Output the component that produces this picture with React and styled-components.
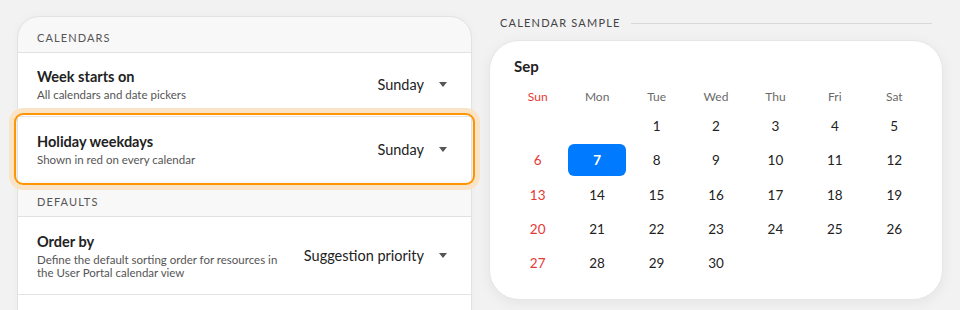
import React from "react";
import styled, { createGlobalStyle } from "styled-components";

const Global = createGlobalStyle`
  html, body { margin: 0; padding: 0; background: #f2f2f3; overflow: hidden; }
  body { font-family: Lato, "Open Sans", sans-serif; color: #222; -webkit-font-smoothing: antialiased; }
  * { box-sizing: border-box; }
`;

const Page = styled.div`
  display: grid;
  grid-template-columns: 455px 454px;
  column-gap: 17px;
  padding: 16px 0 0 17px;
  height: 310px;
  overflow: hidden;
`;

const Panel = styled.div`
  background: #f8f8f8;
  border: 1px solid #e2e2e2;
  border-radius: 22px 22px 0 0;
  box-shadow: 0 0 10px rgba(0, 0, 0, 0.03);
  align-self: start;
`;

const GroupHeader = styled.div`
  height: 36px;
  padding: 14px 0 0 19px;
  font-size: 11px;
  line-height: 14px;
  letter-spacing: 1.1px;
  text-transform: uppercase;
  color: #555;
  border-bottom: 1px solid #e2e2e2;
`;

const Row = styled.div`
  position: relative;
  display: flex;
  align-items: center;
  justify-content: space-between;
  height: ${(p) => p.$h}px;
  padding: 0 24px 0 19px;
  background: #fff;
  border-bottom: ${(p) => (p.$last ? "none" : "1px solid #e4e4e4")};
`;

const Highlight = styled.div`
  position: absolute;
  inset: -4px -4px -4px -4px;
  border: 2px solid #ff9500;
  border-radius: 9px;
  box-shadow: 0 0 0 5px #fae4c8;
  pointer-events: none;
`;

const TextCol = styled.div`
  display: flex;
  flex-direction: column;
  max-width: 252px;
`;

const Title = styled.div`
  font-size: 14.5px;
  line-height: 18px;
  font-weight: 700;
  color: #222;
  margin-bottom: 2px;
`;

const Sub = styled.div`
  font-size: 11.5px;
  line-height: 13px;
  color: #555;
`;

const Select = styled.div`
  display: flex;
  align-items: center;
  gap: 15px;
  font-size: 14.5px;
  color: #222;
`;

const Caret = styled.span`
  width: 0;
  height: 0;
  border-left: 4.5px solid transparent;
  border-right: 4.5px solid transparent;
  border-top: 5px solid #555;
`;

const Right = styled.div`
  display: flex;
  flex-direction: column;
  gap: 10px;
`;

const LabelRow = styled.div`
  display: flex;
  align-items: center;
  gap: 10px;
  padding: 0 11px;
  height: 14px;
`;

const Label = styled.div`
  font-size: 11px;
  line-height: 14px;
  letter-spacing: 1.2px;
  color: #444;
  white-space: nowrap;
`;

const Rule = styled.div`
  flex: 1;
  height: 1px;
  background: #d8d8d8;
`;

const Card = styled.div`
  background: #fff;
  border: 1px solid #e6e6e6;
  border-radius: 30px;
  box-shadow: 0 3px 14px rgba(0, 0, 0, 0.06);
  padding: 15px 18px 18px 18px;
  height: 260px;
`;

const Month = styled.div`
  font-size: 15px;
  line-height: 20px;
  font-weight: 700;
  color: #222;
  padding-left: 6px;
  margin-bottom: 13px;
`;

const Grid = styled.div`
  display: grid;
  grid-template-columns: repeat(7, 1fr);
`;

const WeekDay = styled.div`
  text-align: center;
  font-size: 12px;
  line-height: 16px;
  color: ${(p) => (p.$red ? "#e53935" : "#6a6a6a")};
  margin-bottom: 4px;
`;

const Day = styled.div`
  height: 34.3px;
  display: flex;
  align-items: center;
  justify-content: center;
  font-size: 13.5px;
  color: ${(p) => (p.$selected ? "#fff" : p.$red ? "#e53935" : "#222")};
  font-weight: ${(p) => (p.$selected ? 700 : 400)};
  & > span {
    display: flex;
    align-items: center;
    justify-content: center;
    width: 58px;
    height: 32px;
    border-radius: 6px;
    background: ${(p) => (p.$selected ? "#007aff" : "transparent")};
  }
`;

const weekdays = ["Sun", "Mon", "Tue", "Wed", "Thu", "Fri", "Sat"];
const days = [null, null, ...Array.from({ length: 30 }, (_, i) => i + 1)];

export default function App() {
  return (
    <>
      <Global />
      <Page>
        <Panel>
          <GroupHeader>Calendars</GroupHeader>
          <Row $h={64}>
            <TextCol>
              <Title>Week starts on</Title>
              <Sub>All calendars and date pickers</Sub>
            </TextCol>
            <Select>
              Sunday <Caret />
            </Select>
          </Row>
          <Row $h={64} $last>
            <Highlight />
            <TextCol>
              <Title>Holiday weekdays</Title>
              <Sub>Shown in red on every calendar</Sub>
            </TextCol>
            <Select>
              Sunday <Caret />
            </Select>
          </Row>
          <GroupHeader>Defaults</GroupHeader>
          <Row $h={78}>
            <TextCol>
              <Title>Order by</Title>
              <Sub>Define the default sorting order for resources in the User Portal calendar view</Sub>
            </TextCol>
            <Select>
              Suggestion priority <Caret />
            </Select>
          </Row>
          <Row $h={40} $last />
        </Panel>
        <Right>
          <LabelRow>
            <Label>CALENDAR SAMPLE</Label>
            <Rule />
          </LabelRow>
          <Card>
            <Month>Sep</Month>
            <Grid>
              {weekdays.map((d, i) => (
                <WeekDay key={d} $red={i === 0}>
                  {d}
                </WeekDay>
              ))}
              {days.map((d, i) => (
                <Day key={i} $red={i % 7 === 0} $selected={d === 7}>
                  <span>{d}</span>
                </Day>
              ))}
            </Grid>
          </Card>
        </Right>
      </Page>
    </>
  );
}
